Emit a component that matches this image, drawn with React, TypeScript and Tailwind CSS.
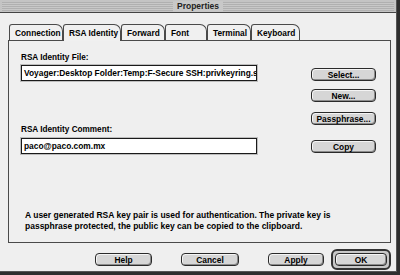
import React from 'react';

const font = "font-['Liberation_Sans',Arial,sans-serif]";

function Tab({ label, w, active }: { label: string; w: string; active?: boolean }) {
  return (
    <div
      className={`${w} h-[16px] border border-b-0 border-[#4a4a4a] rounded-tl-[3px] rounded-tr-[7px] bg-[#f0f0f0] pl-[5px] pt-[3px] text-[8.3px] leading-[10px] font-bold text-black whitespace-nowrap ${
        active ? 'relative z-10 -mb-px h-[17px]' : ''
      }`}
    >
      {label}
    </div>
  );
}

function Button({ label, w }: { label: string; w: string }) {
  return (
    <div
      className={`${w} h-[13px] rounded-[4px] border border-[#2a2a2a] bg-[#d6d6d6] shadow-[inset_1px_1px_0_#f4f4f4,inset_-1px_-1px_0_#8c8c8c] flex items-center justify-center text-[8.4px] leading-[10px] font-bold text-black`}
    >
      {label}
    </div>
  );
}

export default function App() {
  return (
    <div className={`w-[400px] h-[275px] bg-[#2e2e2e] ${font}`}>
      <div className="w-[397px] h-[272px] bg-[#efefef] flex flex-col border-r border-b border-[#555]">
        {/* Title bar */}
        <div className="h-[13px] bg-[#c4c4c4] border-b border-[#444] flex items-center px-[2px]">
          <div className="flex-1 h-[9px] bg-[repeating-linear-gradient(#b0b0b0_0_1px,#c8c8c8_1px_2px)]" />
          <div className="px-[4px] h-[11px] bg-[#c8c8c8] text-[8.5px] leading-[11px] font-bold text-[#222]">Properties</div>
          <div className="flex-1 h-[9px] bg-[repeating-linear-gradient(#b0b0b0_0_1px,#c8c8c8_1px_2px)]" />
        </div>

        <div className="flex-1 flex flex-col pl-[8px] pr-[5px]">
          {/* Tabs */}
          <div className="flex mt-[11px] pl-[1px]">
            <Tab label="Connection" w="w-[54px]" />
            <Tab label="RSA Identity" w="w-[58px]" active />
            <Tab label="Forward" w="w-[44px]" />
            <Tab label="Font" w="w-[42px]" />
            <Tab label="Terminal" w="w-[44px]" />
            <Tab label="Keyboard" w="w-[49px]" />
          </div>

          {/* Panel */}
          <div className="h-[203px] border border-[#4a4a4a] bg-[#efefef] flex flex-col">
            <div className="flex pl-[12px] pt-[12px]">
              <div className="w-[236px] flex flex-col">
                <div className="text-[8.2px] leading-[10px] font-bold text-black">RSA Identity File:</div>
                <div className="mt-[2px] h-[16px] border border-[#1a1a1a] bg-white shadow-[0_0_0_1px_#bdbdbd] pl-[2px] text-[8.4px] leading-[14px] font-bold text-black overflow-hidden whitespace-nowrap">
                  Voyager:Desktop Folder:Temp:F-Secure SSH:privkeyring.s
                </div>
                <div className="mt-[44px] text-[8.2px] leading-[10px] font-bold text-black">RSA Identity Comment:</div>
                <div className="mt-[3px] h-[16px] border border-[#1a1a1a] bg-white shadow-[0_0_0_1px_#bdbdbd] pl-[2px] text-[8.4px] leading-[14px] font-bold text-black">
                  paco@paco.com.mx
                </div>
              </div>
              <div className="ml-[54px] w-[65px] flex flex-col pt-[15px]">
                <Button label="Select..." w="w-[65px]" />
                <div className="mt-[8px]"><Button label="New..." w="w-[65px]" /></div>
                <div className="mt-[10px]"><Button label="Passphrase..." w="w-[65px]" /></div>
                <div className="mt-[15px]"><Button label="Copy" w="w-[65px]" /></div>
              </div>
            </div>
            <div className="mt-auto mb-[10px] pl-[16px] text-[8.5px] leading-[11px] font-bold text-black whitespace-nowrap">
              <div>A user generated RSA key pair is used for authentication. The private key is</div>
              <div>passphrase protected, the public key can be copied to the clipboard.</div>
            </div>
          </div>

          {/* Bottom buttons */}
          <div className="flex items-center mt-[6px]">
            <div className="ml-[87px]"><Button label="Help" w="w-[57px]" /></div>
            <div className="ml-[29px]"><Button label="Cancel" w="w-[58px]" /></div>
            <div className="ml-[29px]"><Button label="Apply" w="w-[56px]" /></div>
            <div className="ml-[7px] p-[2px] rounded-[6px] border-[2px] border-[#333] bg-[#c8c8c8]">
              <Button label="OK" w="w-[52px]" />
            </div>
          </div>
        </div>
      </div>
    </div>
  );
}
